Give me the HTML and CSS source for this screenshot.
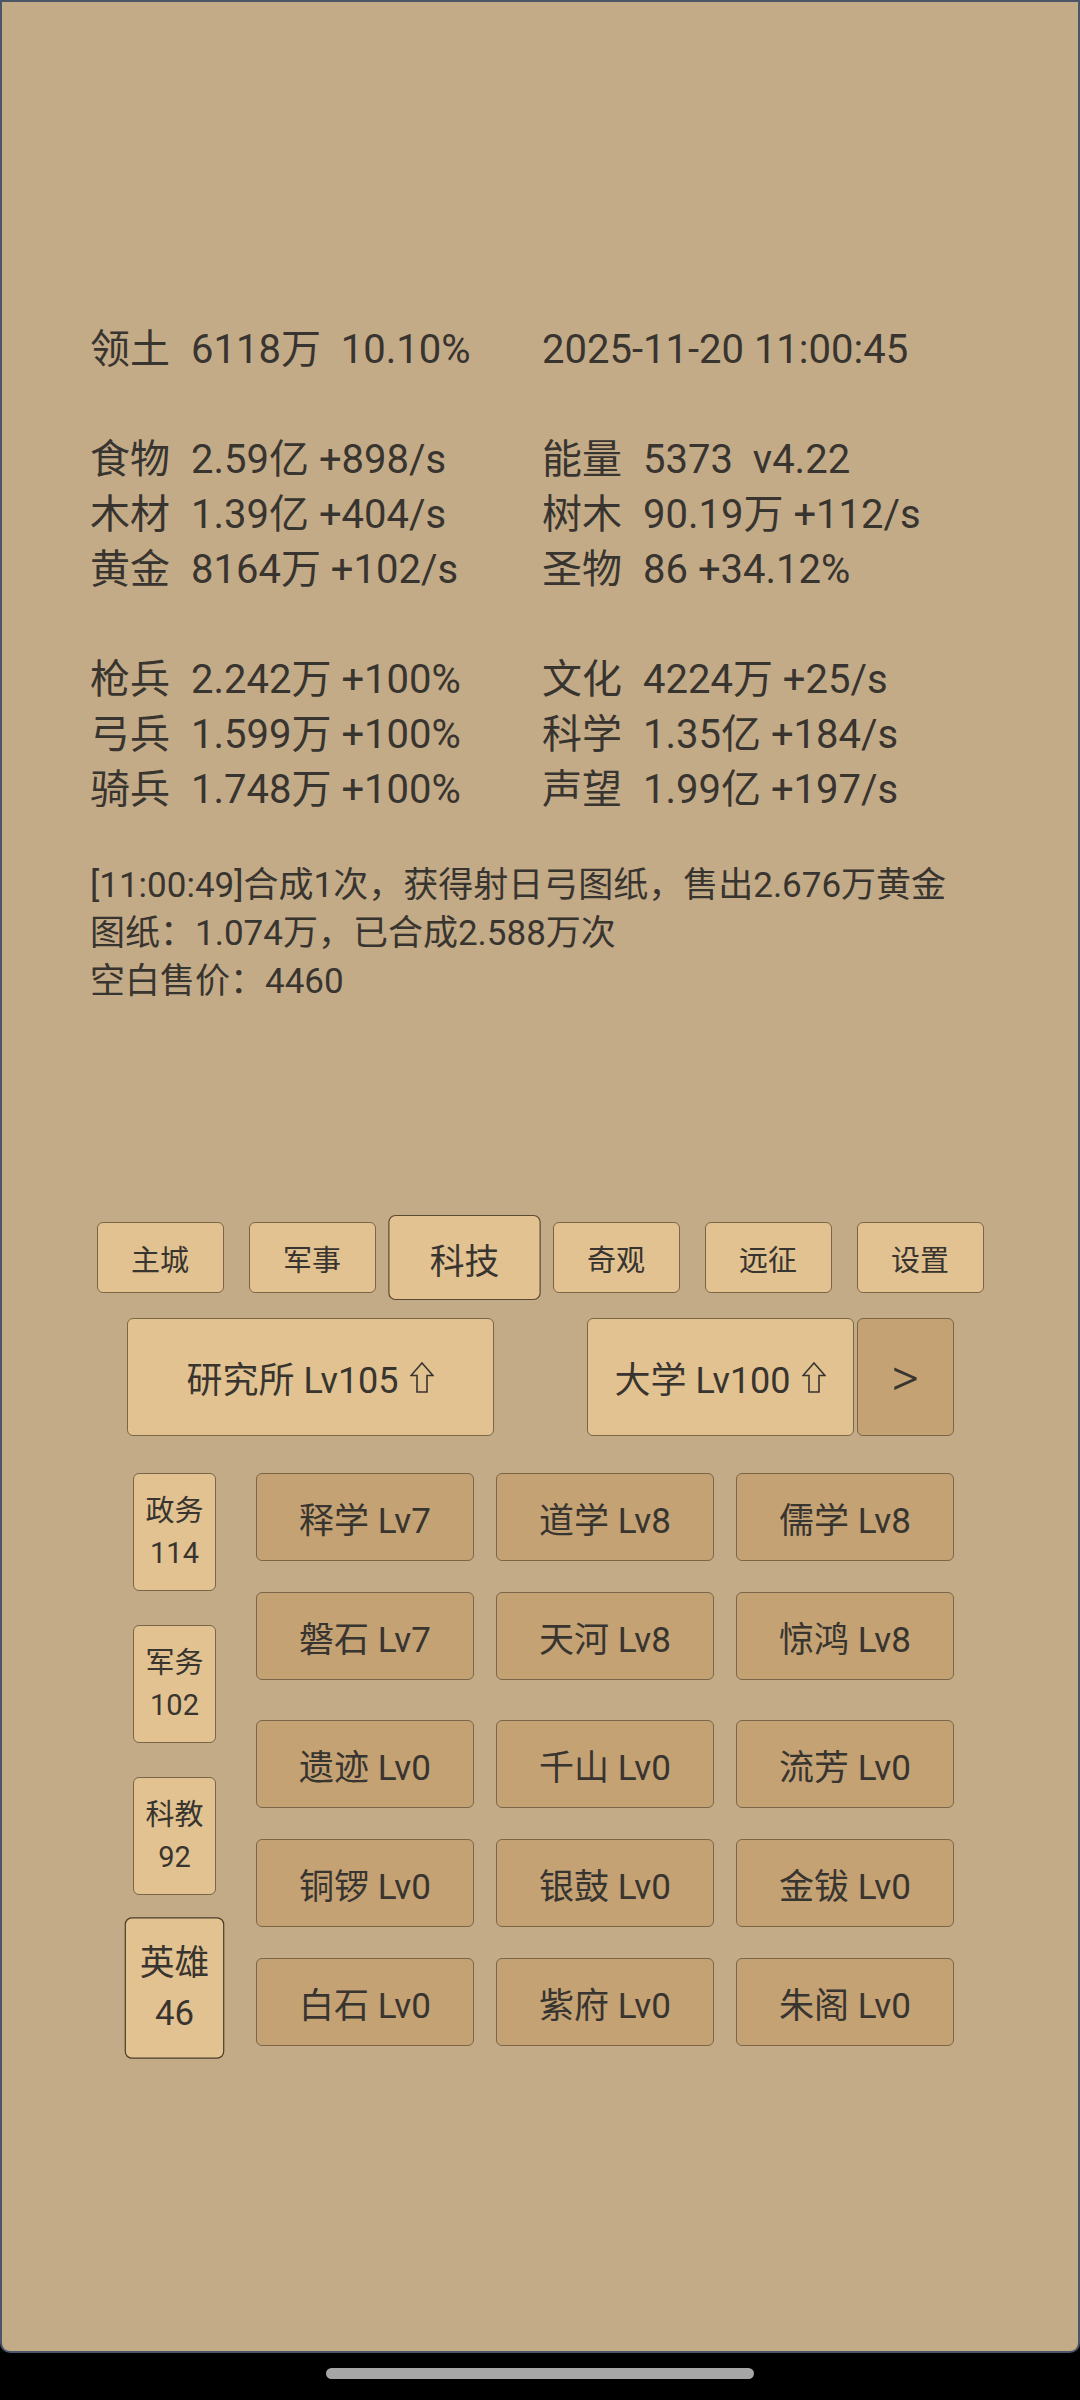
FILE: index.html
```html
<!DOCTYPE html>
<html lang="zh-CN">
<head>
<meta charset="utf-8">
<title>科技</title>
<link rel="stylesheet" href="styles.css">
</head>
<body>
<div class="screen">
  <div class="stats">
    <div class="group">
      <div class="cell"><span class="lbl">领土</span><span class="val">6118万  10.10%</span></div>
      <div class="cell"><span class="val">2025-11-20 11:00:45</span></div>
    </div>
    <div class="group">
      <div class="cell"><span class="lbl">食物</span><span class="val">2.59亿 +898/s</span></div>
      <div class="cell"><span class="lbl">能量</span><span class="val">5373  v4.22</span></div>
      <div class="cell"><span class="lbl">木材</span><span class="val">1.39亿 +404/s</span></div>
      <div class="cell"><span class="lbl">树木</span><span class="val">90.19万 +112/s</span></div>
      <div class="cell"><span class="lbl">黄金</span><span class="val">8164万 +102/s</span></div>
      <div class="cell"><span class="lbl">圣物</span><span class="val">86 +34.12%</span></div>
    </div>
    <div class="group">
      <div class="cell"><span class="lbl">枪兵</span><span class="val">2.242万 +100%</span></div>
      <div class="cell"><span class="lbl">文化</span><span class="val">4224万 +25/s</span></div>
      <div class="cell"><span class="lbl">弓兵</span><span class="val">1.599万 +100%</span></div>
      <div class="cell"><span class="lbl">科学</span><span class="val">1.35亿 +184/s</span></div>
      <div class="cell"><span class="lbl">骑兵</span><span class="val">1.748万 +100%</span></div>
      <div class="cell"><span class="lbl">声望</span><span class="val">1.99亿 +197/s</span></div>
    </div>
  </div>

  <div class="log">
    <div>[11:00:49]合成1次，获得射日弓图纸，售出2.676万黄金</div>
    <div>图纸：1.074万，已合成2.588万次</div>
    <div>空白售价：4460</div>
  </div>

  <div class="tabs">
    <div class="btn light tab">主城</div>
    <div class="btn light tab">军事</div>
    <div class="btn light tab selected">科技</div>
    <div class="btn light tab">奇观</div>
    <div class="btn light tab">远征</div>
    <div class="btn light tab">设置</div>
  </div>

  <div class="buildings">
    <div class="btn light bld bld-left">研究所 Lv105 <svg class="up" viewBox="0 0 24 31" width="24" height="31"><polygon points="12,1 23,13.5 17,13.5 17,30 7,30 7,13.5 1,13.5" /></svg></div>
    <div class="btn light bld bld-right">大学 Lv100 <svg class="up" viewBox="0 0 24 31" width="24" height="31"><polygon points="12,1 23,13.5 17,13.5 17,30 7,30 7,13.5 1,13.5" /></svg></div>
    <div class="btn dark next">&gt;</div>
  </div>

  <div class="research">
    <div class="side">
      <div class="btn light sidebtn"><span>政务</span><span>114</span></div>
      <div class="btn light sidebtn"><span>军务</span><span>102</span></div>
      <div class="btn light sidebtn"><span>科教</span><span>92</span></div>
      <div class="btn light sidebtn selected-side"><span>英雄</span><span>46</span></div>
    </div>
    <div class="techs">
      <div class="grid">
        <div class="btn dark tech">释学 Lv7</div>
        <div class="btn dark tech">道学 Lv8</div>
        <div class="btn dark tech">儒学 Lv8</div>
        <div class="btn dark tech">磐石 Lv7</div>
        <div class="btn dark tech">天河 Lv8</div>
        <div class="btn dark tech">惊鸿 Lv8</div>
      </div>
      <div class="grid grid-second">
        <div class="btn dark tech">遗迹 Lv0</div>
        <div class="btn dark tech">千山 Lv0</div>
        <div class="btn dark tech">流芳 Lv0</div>
        <div class="btn dark tech">铜锣 Lv0</div>
        <div class="btn dark tech">银鼓 Lv0</div>
        <div class="btn dark tech">金钹 Lv0</div>
        <div class="btn dark tech">白石 Lv0</div>
        <div class="btn dark tech">紫府 Lv0</div>
        <div class="btn dark tech">朱阁 Lv0</div>
      </div>
    </div>
  </div>
</div>
<div class="navbar"><div class="handle"></div></div>
</body>
</html>
```

FILE: styles.css
```css
html, body {
  margin: 0;
  padding: 0;
  background: #000;
}
body {
  width: 1080px;
  height: 2400px;
  overflow: hidden;
  font-family: Roboto, "Noto Sans CJK SC", "DejaVu Sans", sans-serif;
  color: #38342f;
}
.screen {
  box-sizing: border-box;
  height: 2353px;
  background: #c4ab87;
  border: 2px solid #4b5669;
  border-radius: 0 0 10px 10px;
  padding-top: 320px;
}
.stats {
  padding-left: 88px;
  font-size: 40px;
  line-height: 55px;
}
.group {
  display: grid;
  grid-template-columns: 452px auto;
}
.group + .group {
  margin-top: 55px;
}
.cell {
  white-space: nowrap;
}
.lbl {
  display: inline-block;
  width: 101px;
}
.val {
  white-space: pre;
}
.log {
  padding-left: 88px;
  margin-top: 45px;
  font-size: 35px;
  line-height: 48px;
}
.btn {
  box-sizing: border-box;
  display: flex;
  align-items: center;
  justify-content: center;
  border: 1px solid #7b6647;
  border-radius: 6px;
  white-space: pre;
}
.light {
  background: #e2c290;
}
.dark {
  background: #c4a274;
}
.tabs {
  display: flex;
  justify-content: center;
  gap: 25px;
  margin-top: 216px;
}
.tab {
  width: 127px;
  height: 71px;
  font-size: 29px;
}
.selected {
  transform: scale(1.2);
  border-color: #5b4a32;
}
.buildings {
  display: flex;
  justify-content: center;
  margin-top: 25px;
}
.bld {
  height: 118px;
  font-size: 36px;
}
.bld-left {
  width: 367px;
  margin-right: 93px;
}
.bld-right {
  width: 267px;
}
.up {
  fill: none;
  stroke: #38342f;
  stroke-width: 1.6;
  stroke-linejoin: miter;
  margin-left: 2px;
}
.next {
  width: 97px;
  height: 118px;
  margin-left: 3px;
  font-size: 54px;
  font-weight: 300;
}
.research {
  display: flex;
  margin-top: 37px;
  padding-left: 131px;
}
.side {
  width: 83px;
  display: flex;
  flex-direction: column;
  gap: 34px;
  margin-right: 40px;
}
.sidebtn {
  width: 83px;
  height: 118px;
  flex-direction: column;
  font-size: 29px;
  line-height: 42px;
}
.selected-side {
  transform: scale(1.2);
  border-color: #4a3c28;
}
.techs {
  width: 698px;
}
.grid {
  display: grid;
  grid-template-columns: repeat(3, 218px);
  column-gap: 22px;
  row-gap: 31px;
}
.grid-second {
  margin-top: 40px;
}
.tech {
  height: 88px;
  font-size: 35px;
}
.navbar {
  height: 47px;
  display: flex;
  justify-content: center;
  padding-top: 15px;
  box-sizing: border-box;
}
.handle {
  width: 428px;
  height: 11px;
  border-radius: 6px;
  background: #a6a6a6;
}
```
